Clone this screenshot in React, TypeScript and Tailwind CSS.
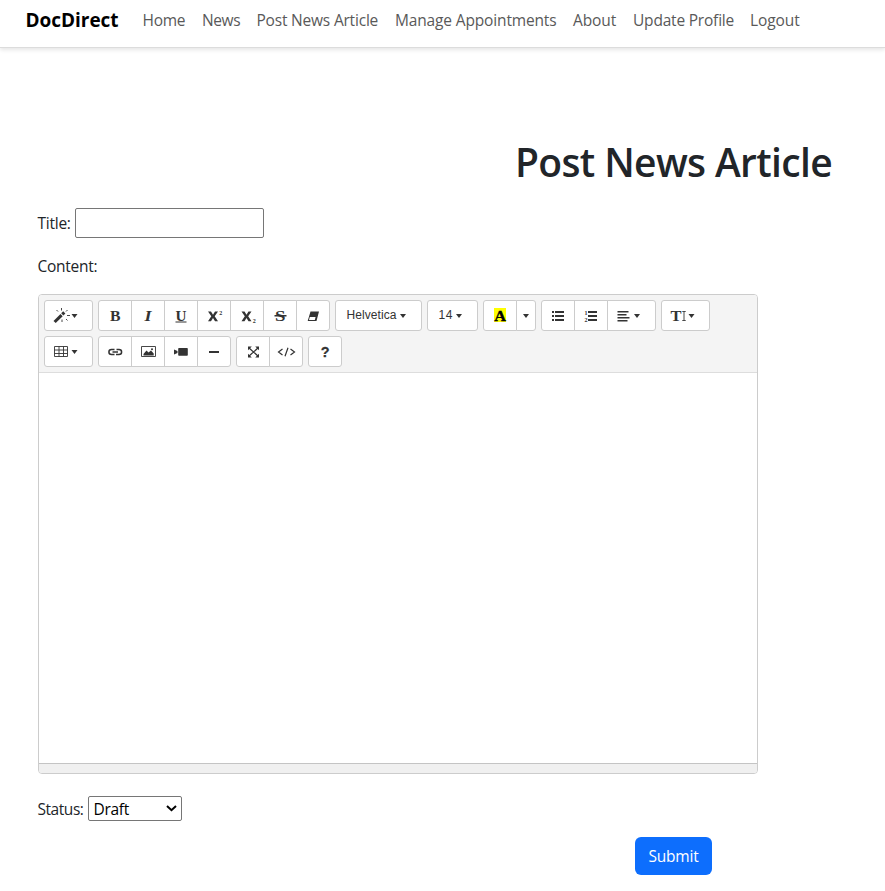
import React from "react";

const ink = "#333";

function Btn({ w, pos = "only", children, label }: { w: string; pos?: "only" | "first" | "mid" | "last"; children: React.ReactNode; label: string }) {
  const round = { only: "rounded-[3px]", first: "rounded-l-[3px]", mid: "-ml-px", last: "-ml-px rounded-r-[3px]" }[pos];
  return (
    <button aria-label={label} className={`h-[31px] shrink-0 border border-[#ccc] bg-white ${w} ${round}`}>
      <svg className="-m-px block h-[31px] overflow-visible" width="100%" height="31" fill={ink} stroke="none">
        {children}
      </svg>
    </button>
  );
}

const Caret = ({ x, y = 14 }: { x: number; y?: number }) => <path d={`M${x} ${y}h6l-3 4z`} />;

const Glyph = ({ x, y = 21, size = 15, width, italic, weight = 700, children }: { x: number; y?: number; size?: number; width?: number; italic?: boolean; weight?: number; children: string }) => (
  <text x={x} y={y} fontSize={size} textLength={width} lengthAdjust="spacingAndGlyphs" fontWeight={weight} fontStyle={italic ? "italic" : "normal"} fontFamily="'Liberation Serif', serif">
    {children}
  </text>
);

const links: [string, string, string][] = [
  ["Home", "w-[59.5px]", "tracking-[-0.25px]"],
  ["News", "w-[54.5px]", "tracking-[-0.4px]"],
  ["Post News Article", "w-[138.5px]", "tracking-[-0.2px]"],
  ["Manage Appointments", "w-[178px]", "tracking-[-0.15px]"],
  ["About", "w-[60px]", "tracking-[-0.1px]"],
  ["Update Profile", "w-[117px]", "tracking-[-0.2px]"],
  ["Logout", "w-[66px]", "tracking-[-0.1px]"],
];

function Toolbar() {
  return (
    <div className="flex h-[78px] flex-col gap-[5px] border-b border-[#ddd] bg-[#f4f4f4] px-[5px] pt-[5px]">
      <div className="flex gap-[5px]">
        <Btn w="w-[49px]" label="Style">
          <path d="M9.5 21L16.5 14l2.200 2.200L11.7 23z" />
          <path d="M17.200 13.300l2-2 2.200 2.200-2 2z" />
          <path d="M12.500 10l1.500 1.500M17.500 8v2.500M23.500 10L22 11.500M23 15.500h3M22 19l1.500 1.500M18 19.500V22" stroke={ink} strokeWidth=".9" fill="none" />
          <Caret x={27.5} />
        </Btn>
        <div className="flex">
          <Btn w="w-[34px]" pos="first" label="Bold"><Glyph x={12} width={10.5}>B</Glyph></Btn>
          <Btn w="w-[34px]" pos="mid" label="Italic"><Glyph x={13.5} italic width={7}>I</Glyph></Btn>
          <Btn w="w-[34px]" pos="mid" label="Underline">
            <Glyph x={11.5} y={20.5} size={14} width={11}>U</Glyph>
            <path d="M11.500 21.500h11v1h-11z" />
          </Btn>
          <Btn w="w-[34px]" pos="mid" label="Superscript">
            <path d="M11 11.500h3l2 3.200 2-3.200h3l-3.300 4.800L21 21.200h-3l-2-3.300-2 3.300h-3l3.300-4.900z" />
            <Glyph x={22.3} y={14.5} size={6}>2</Glyph>
          </Btn>
          <Btn w="w-[34px]" pos="mid" label="Subscript">
            <path d="M11.500 11.500h3l2 3.200 2-3.200h3l-3.300 4.800 3.300 4.900h-3l-2-3.300-2 3.300h-3l3.300-4.900z" />
            <Glyph x={22.8} y={23} size={6}>2</Glyph>
          </Btn>
          <Btn w="w-[34px]" pos="mid" label="Strikethrough">
            <Glyph x={12} width={10.5}>S</Glyph>
            <path d="M11.500 15h12v1.500h-12z" />
          </Btn>
          <Btn w="w-[34px]" pos="last" label="Clear formatting">
            <path fillRule="evenodd" d="M14.500 11.500h8.500L20.500 21h-8.800zM13.800 17L13 20h5.800l.8-3z" />
          </Btn>
        </div>
        <Btn w="w-[87px]" label="Font family">
          <text x="11.500" y="19" fontSize="12" textLength="50" fontFamily="'Liberation Sans', sans-serif">Helvetica</text>
          <Caret x={65} />
        </Btn>
        <Btn w="w-[51px]" label="Font size">
          <text x="11.500" y="19" fontSize="12" textLength="14" fontFamily="'Liberation Sans', sans-serif">14</text>
          <Caret x={29} />
        </Btn>
        <div className="flex">
          <Btn w="w-[34px]" pos="first" label="Recent color">
            <path d="M11 8h12v14H11z" fill="#ff0" />
            <g fill="#000" stroke="#000" strokeWidth=".3"><Glyph x={11.2} width={11.8}>A</Glyph></g>
          </Btn>
          <Btn w="w-[20px]" pos="last" label="More colors"><Caret x={7} /></Btn>
        </div>
        <div className="flex">
          <Btn w="w-[34px]" pos="first" label="Unordered list">
            <path d="M11 11h2v2h-2zM14 11h9v2h-9zM11 15h2v2h-2zM14 15h9v2h-9zM11 19h2v2h-2zM14 19h9v2h-9z" />
          </Btn>
          <Btn w="w-[34px]" pos="mid" label="Ordered list">
            <path d="M14 11h9v2h-9zM14 15h9v2h-9zM14 19h9v2h-9z" />
            <Glyph x={10.5} y={15} size={6}>1</Glyph>
            <Glyph x={10.5} y={22} size={6}>2</Glyph>
          </Btn>
          <Btn w="w-[49px]" pos="last" label="Paragraph">
            <path d="M10.500 11h11v1.400h-11zM10.500 14h9v1.400h-9zM10.500 17h12v1.400h-12zM10.500 20h10v1.400h-10z" />
            <Caret x={27} />
          </Btn>
        </div>
        <Btn w="w-[49px]" label="Line height">
          <Glyph x={9.5} width={11}>T</Glyph>
          <path d="M21.300 11.500h3.400M21.300 20.500h3.400M23 12v8" stroke={ink} fill="none" strokeWidth=".9" />
          <Caret x={27.5} />
        </Btn>
      </div>
      <div className="flex gap-[5px]">
        <Btn w="w-[49px]" label="Table">
          <path d="M10.5 10.5h13v10h-13zM10.5 14h13M10.5 17.500h13M15 10.5v10M19.5 10.5v10" stroke={ink} fill="none" strokeWidth=".9" />
          <Caret x={27.5} />
        </Btn>
        <div className="flex">
          <Btn w="w-[34px]" pos="first" label="Link">
            <path d="M16.500 18.5h-3a2.600 2.500 0 0 1 0-5h3M18.500 13.5h2.500a2.600 2.500 0 0 1 0 5h-3M14.500 16h5.500" stroke={ink} fill="none" strokeWidth="1.5" />
          </Btn>
          <Btn w="w-[34px]" pos="mid" label="Picture">
            <path d="M10.5 10.5h14v10h-14z" stroke={ink} fill="none" strokeWidth=".9" />
            <path d="M12.500 19.5v-1.500l3-3.500 2 2 2.500-2 2.700 3v2z" /><circle cx="21" cy="13.300" r="1" />
          </Btn>
          <Btn w="w-[34px]" pos="mid" label="Video">
            <path d="M10 13.500l3.500 1.500v2L10 18.500zM15 12h8q.8 0 .8.8v6.200q0 .8-.8.8h-8q-.8 0-.8-.8v-6.200q0-.8.8-.8z" />
          </Btn>
          <Btn w="w-[34px]" pos="last" label="Horizontal rule"><path d="M12 15h10v2H12z" /></Btn>
        </div>
        <div className="flex">
          <Btn w="w-[34px]" pos="first" label="Full screen">
            <path d="M12.5 11.5l10 9M22.5 11.5l-10 9" stroke={ink} strokeWidth="1.3" />
            <path d="M12 10.500h3.800L12 14.300zM23 10.500v3.800l-3.800-3.800zM12 21.500v-3.800l3.800 3.800zM23 21.500h-3.800l3.800-3.800z" />
          </Btn>
          <Btn w="w-[34px]" pos="last" label="Code view">
            <path d="M13.500 13L9.500 16l4 3M21.500 13l4 3-4 3M19 11.800l-3 8.500" stroke={ink} fill="none" strokeWidth="1.200" />
          </Btn>
        </div>
        <Btn w="w-[34px]" label="Help">
          <text x="12.700" y="21.300" fontSize="15.500" textLength="8.800" lengthAdjust="spacingAndGlyphs" fontWeight="700" stroke={ink} strokeWidth=".3" fontFamily="'Liberation Sans', sans-serif">?</text>
        </Btn>
      </div>
    </div>
  );
}

export default function App() {
  return (
    <div className="h-[891px] overflow-hidden bg-white font-['Open_Sans',sans-serif] text-[15.5px] leading-6 text-[#212529]">
      <nav className="flex h-[48px] border-b border-[#dcdcdc] pl-[25.500px] pt-[8px] shadow-[0_2px_4px_rgba(0,0,0,0.1)]">
        <a className="w-[109px] whitespace-nowrap text-[19px] font-bold tracking-[-0.03px] text-black">DocDirect</a>
        {links.map(([name, width, tracking]) => (
          <a key={name} className={`shrink-0 whitespace-nowrap pl-2 text-[#595959] ${width} ${tracking}`}>{name}</a>
        ))}
      </nav>
      <main className="pl-[38px]">
        <h1 className="pl-[477px] pt-[90px] text-[39px] font-semibold leading-[48px] tracking-[-0.63px] whitespace-nowrap">Post News Article</h1>
        <div className="mt-[22px] flex h-[30px] items-center">
          <label className="-ml-[0.5px] w-[37.500px] shrink-0 tracking-[-0.25px]">Title:</label>
          <input className="h-[30px] w-[189px] rounded-[2px] border border-[#767676] bg-white" />
        </div>
        <p className="-ml-[0.5px] mt-[16px] tracking-[-0.25px]">Content:</p>
        <section className="mt-[16px] flex h-[480px] w-[720px] flex-col overflow-hidden rounded-[4px] border border-[#ccc]">
          <Toolbar />
          <div className="flex-1 bg-white" />
          <div className="h-[10px] border-t border-[#c4c4c4] bg-[#f0f0f0]" />
        </section>
        <div className="mt-[22px] flex h-[25px] items-center">
          <label className="-ml-[0.5px] w-[50.500px] shrink-0 tracking-[-0.45px]">Status:</label>
          <div className="flex h-[25px] w-[94px] items-center justify-between rounded-[2px] border border-[#767676] pl-[4.500px] pr-[4px] text-black tracking-[-0.3px]">
            Draft
            <svg width="11" height="7" fill="none" stroke="#000" strokeWidth="2"><path d="M1 1l4.500 4.200L10 1" /></svg>
          </div>
        </div>
        <button className="ml-[597px] mt-[16px] block h-[38px] w-[77px] rounded-[6px] bg-[#0d6efd] tracking-[-0.2px] text-white">Submit</button>
      </main>
    </div>
  );
}
